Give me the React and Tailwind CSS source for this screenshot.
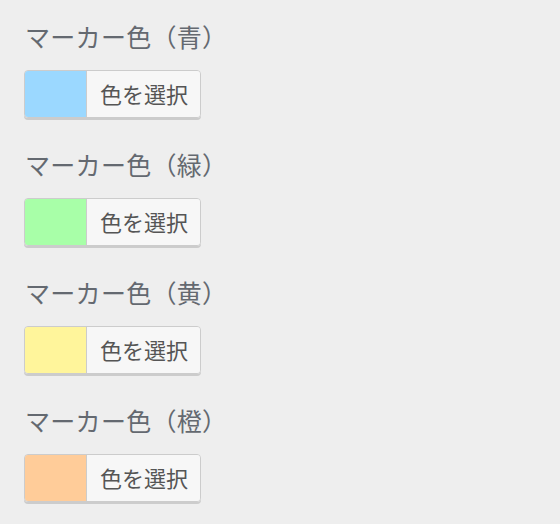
import React from "react";

const items = [
  { label: "マーカー色（青）", color: "#9bd8ff" },
  { label: "マーカー色（緑）", color: "#a8ffa8" },
  { label: "マーカー色（黄）", color: "#fff59b" },
  { label: "マーカー色（橙）", color: "#ffcc99" },
];

export default function App() {
  return (
    <div
      className="w-[560px] h-[524px] bg-[#eeeeee] pl-[24px] pt-[21px] flex flex-col gap-[31px]"
      style={{ fontFamily: '"Noto Sans CJK JP", "Noto Sans", sans-serif' }}
    >
      {items.map((it) => (
        <div key={it.label} className="flex flex-col gap-[19px]">
          <div className="text-[25px] leading-[30px] tracking-[0.3px] text-[#646970] pl-[1px]">{it.label}</div>
          <div className="flex w-[177px] h-[48px] rounded-[4px] border border-[#cccccc] shadow-[0_2px_0_#cccccc] overflow-hidden">
            <div className="w-[61px] h-full" style={{ backgroundColor: it.color }} />
            <div className="flex-1 flex items-center bg-[#f7f7f7] border-l border-[#cccccc] pl-[13px] pb-[2px] text-[22px] text-[#555555]">
              色を選択
            </div>
          </div>
        </div>
      ))}
    </div>
  );
}
